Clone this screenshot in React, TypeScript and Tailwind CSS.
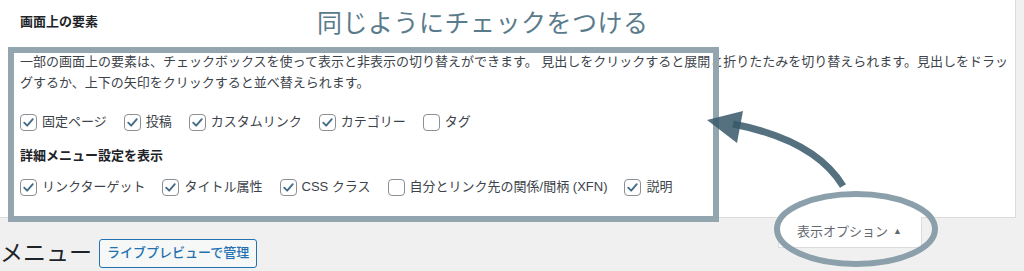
import React from 'react';

const font = { fontFamily: '"Liberation Sans", "Noto Sans CJK JP", sans-serif' };

function Box({ checked }: { checked: boolean }) {
  return (
    <span className="w-[17px] h-[17px] shrink-0 rounded-[4px] border border-[#8c8f94] bg-white flex items-center justify-center">
      {checked && (
        <svg viewBox="0 0 16 16" className="w-[15px] h-[15px]">
          <path d="M3.4 8.2 L6.6 11.4 L12.6 4.4" fill="none" stroke="#3f6a86" strokeWidth="1.9" strokeLinecap="round" strokeLinejoin="round" />
        </svg>
      )}
    </span>
  );
}

function Item({ label, checked = true }: { label: string; checked?: boolean }) {
  return (
    <label className="flex items-center gap-[5px] mr-[17px]">
      <Box checked={checked} />
      <span>{label}</span>
    </label>
  );
}

export default function App() {
  return (
    <div className="relative w-full h-[271px] bg-[#f0f0f1] overflow-hidden text-[13px] text-[#3c434a]" style={font}>
      {/* Screen options panel */}
      <div className="w-[1016px] h-[218px] bg-white border-r border-b border-[#dcdcde] pl-5 pt-[13px]">
        <h5 className="font-bold text-[#1d2327] leading-[18px]">画面上の要素</h5>
        <div className="mt-[20px] leading-[21px] whitespace-nowrap">
          一部の画面上の要素は、チェックボックスを使って表示と非表示の切り替えができます。 見出しをクリックすると展開と折りたたみを切り替えられます。見出しをドラッ
          <br />
          グするか、上下の矢印をクリックすると並べ替えられます。
        </div>
        <div className="flex items-center mt-[19px] h-5">
          <Item label="固定ページ" />
          <Item label="投稿" />
          <Item label="カスタムリンク" />
          <Item label="カテゴリー" />
          <Item label="タグ" checked={false} />
        </div>
        <h5 className="font-bold text-[#1d2327] leading-[18px] mt-[15px]">詳細メニュー設定を表示</h5>
        <div className="flex items-center mt-[12px] h-5">
          <Item label="リンクターゲット" />
          <Item label="タイトル属性" />
          <Item label="CSS クラス" />
          <Item label="自分とリンク先の関係/間柄 (XFN)" checked={false} />
          <Item label="説明" />
        </div>
      </div>

      {/* Tab + heading row */}
      <div className="flex justify-end pr-[102px] -mt-px">
        <button className="h-[31px] pl-[18px] pr-[19px] bg-white border border-t-0 border-[#dcdcde] text-[#646970] flex items-center gap-[5px]">
          <span>表示オプション</span>
          <span className="text-[9px]">▲</span>
        </button>
      </div>
      <div className="absolute left-0 top-[238px] flex items-center gap-[7px]">
        <h1 className="text-[23px] text-[#1d2327] leading-[30px]">メニュー</h1>
        <button className="h-[29px] px-[7px] rounded-[3px] border border-[#2271b1] bg-[#f6f7f7] text-[#2271b1] font-medium">
          ライブプレビューで管理
        </button>
      </div>

      {/* Annotation overlays */}
      <div className="absolute left-[317px] top-[6px] text-[25px] leading-[34px] text-[#5a7b8b] tracking-[0.5px]">
        同じようにチェックをつける
      </div>
      <div className="absolute left-[8px] top-[47px] w-[711px] h-[175px] border-[6px] border-[#93a6b0] pointer-events-none" />
      <svg className="absolute inset-0 pointer-events-none" width="1024" height="271" viewBox="0 0 1024 271">
        <ellipse cx="856" cy="229" rx="79" ry="35" fill="none" stroke="#8ba0aa" strokeWidth="6" />
        <g opacity="0.85">
          <path d="M843 186 Q815 140 733 124" fill="none" stroke="#37586a" strokeWidth="7" />
        </g>
        <polygon points="707,120 743,111 737,143" fill="#37586a" opacity="0.85" />
      </svg>
    </div>
  );
}
